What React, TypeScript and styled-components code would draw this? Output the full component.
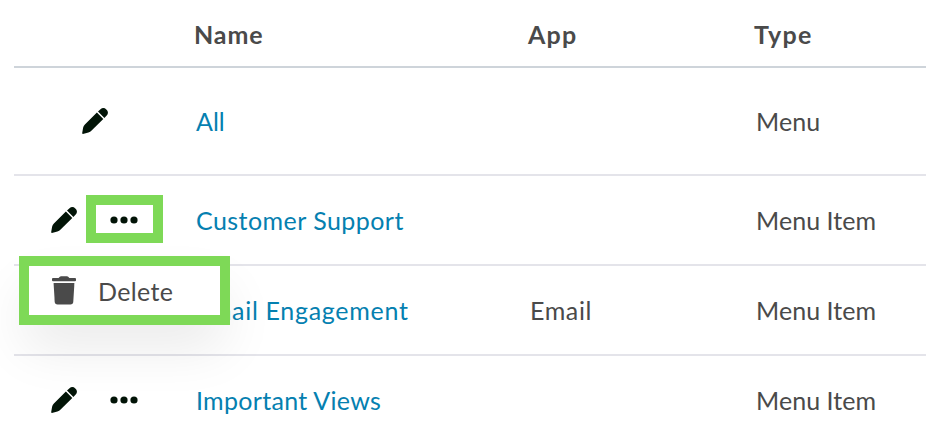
import React from 'react';
import styled, { createGlobalStyle } from 'styled-components';

const GlobalStyle = createGlobalStyle`
  body {
    margin: 0;
    background: #fff;
    overflow: hidden;
  }
`;

const Page = styled.main`
  width: 926px;
  height: 436px;
  overflow: hidden;
  box-sizing: border-box;
  padding-left: 14px;
  background: #fff;
  color: #4a4a4a;
  font-family: Lato, 'Open Sans', sans-serif;
  font-size: 25px;
  line-height: 30px;
`;

const Row = styled.div<{ $height: number; $header?: boolean }>`
  position: relative;
  display: grid;
  grid-template-columns: 180px 334px 226px 1fr;
  align-items: center;
  box-sizing: border-box;
  height: ${(p) => p.$height}px;
  border-bottom: 2px solid ${(p) => (p.$header ? '#ced4da' : '#e4e4ea')};
`;

const HeaderCell = styled.div<{ $tracking: number }>`
  font-weight: 700;
  letter-spacing: ${(p) => p.$tracking}px;
  white-space: nowrap;
  padding-top: 2px;
`;

const Cell = styled.div<{ $tracking?: number }>`
  padding-left: 2px;
  letter-spacing: ${(p) => p.$tracking ?? 0}px;
  white-space: nowrap;
`;

const NameLink = styled.a<{ $tracking: number }>`
  color: #0580b0;
  letter-spacing: ${(p) => p.$tracking}px;
`;

const Actions = styled.div<{ $single?: boolean }>`
  display: flex;
  align-items: center;
  gap: 33px;
  padding-left: ${(p) => (p.$single ? 67.6 : 37)}px;
  color: #021407;

  svg {
    display: block;
  }
`;

const Highlight = styled.div`
  position: absolute;
  left: 72px;
  top: 19px;
  box-sizing: border-box;
  width: 77px;
  height: 48px;
  border: 10px solid #7ed957;
`;

const Menu = styled.div`
  position: absolute;
  z-index: 2;
  left: 5px;
  top: 80px;
  display: flex;
  align-items: center;
  gap: 22px;
  box-sizing: border-box;
  width: 211px;
  height: 69px;
  padding-left: 23px;
  border: 10px solid #7ed957;
  background: #fff;
  box-shadow: 0 28px 54px -6px rgba(0, 0, 0, 0.09);
`;

const MenuLabel = styled.span`
  letter-spacing: 0.35px;
`;

const Pencil = () => (
  <svg width="26" height="26" viewBox="0 0 26 26" fill="currentColor">
    <path d="M14.9 4.6 21.3 11 9.6 22.6Q8.3 23.9 6.4 24.5L.9 25.9Q.1 26 .2 25.1L1.1 19.8Q1.5 17.8 2.9 16.4Z" />
    <path d="M16 3.5 18.5 1.2C20.4-.4 22.6-.3 24.3 1.5 26.4 3.5 26.4 5.8 24.7 7.5L22.4 9.9Z" />
  </svg>
);

const Dots = () => (
  <svg width="28" height="8" viewBox="0 0 28 8" fill="currentColor">
    <circle cx="4" cy="4" r="3.6" />
    <circle cx="14" cy="4" r="3.6" />
    <circle cx="24" cy="4" r="3.6" />
  </svg>
);

const Trash = () => (
  <svg width="24" height="29" viewBox="0 0 24 29" fill="#4a4a4a">
    <path d="M1 2H6.6L7.8.7Q8.3.2 9 .2H15Q15.7.2 16.2.7L17.4 2H23Q24 2 24 3V4.2Q24 5.2 23 5.2H1Q0 5.2 0 4.2V3Q0 2 1 2Z" />
    <path d="M1.6 7H22.4L21.3 25.7Q21.1 28.4 18.4 28.4H5.6Q2.9 28.4 2.7 25.7Z" />
  </svg>
);

type Item = {
  name: string;
  app?: string;
  type: string;
  height: number;
  tracking: number;
  single?: boolean;
  open?: boolean;
};

const items: Item[] = [
  { name: 'All', type: 'Menu', height: 108, tracking: 0, single: true },
  { name: 'Customer Support', type: 'Menu Item', height: 90, tracking: 0.45, open: true },
  { name: 'Email Engagement', app: 'Email', type: 'Menu Item', height: 90, tracking: 0.7 },
  { name: 'Important Views', type: 'Menu Item', height: 90, tracking: 0.3 },
];

export default function App() {
  return (
    <>
      <GlobalStyle />
      <Page>
        <Row $height={68} $header>
          <span />
          <HeaderCell $tracking={0.9}>Name</HeaderCell>
          <HeaderCell $tracking={1.2}>App</HeaderCell>
          <HeaderCell $tracking={1.2}>Type</HeaderCell>
        </Row>
        {items.map((item) => (
          <Row key={item.name} $height={item.height}>
            <Actions $single={item.single}>
              <Pencil />
              {!item.single && <Dots />}
            </Actions>
            <Cell>
              <NameLink $tracking={item.tracking}>{item.name}</NameLink>
            </Cell>
            <Cell $tracking={0.6}>{item.app}</Cell>
            <Cell $tracking={0.05}>{item.type}</Cell>
            {item.open && (
              <>
                <Highlight />
                <Menu>
                  <Trash />
                  <MenuLabel>Delete</MenuLabel>
                </Menu>
              </>
            )}
          </Row>
        ))}
      </Page>
    </>
  );
}
